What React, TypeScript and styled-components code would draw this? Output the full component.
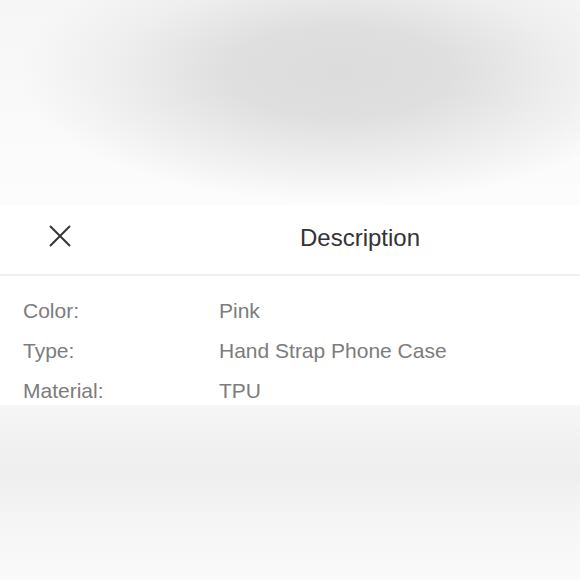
import React from "react";
import styled, { createGlobalStyle } from "styled-components";

const Global = createGlobalStyle`
  html, body { margin: 0; padding: 0; background: #ffffff; }
  body { font-family: "Liberation Sans", Arial, Helvetica, sans-serif; }
`;

const Page = styled.div`
  width: 580px;
  height: 580px;
  display: flex;
  flex-direction: column;
  overflow: hidden;
`;

const BlurredTop = styled.div`
  height: 205px;
  flex-shrink: 0;
  background:
    radial-gradient(ellipse 320px 130px at 340px 72px, #dcdcdc 0%, #dfdfdf 35%, #eeeeee 70%, rgba(251,251,251,0) 100%),
    linear-gradient(to bottom, #f6f6f6 0%, #fbfbfb 80%, #fcfcfc 100%);
`;

const Sheet = styled.section`
  height: 200px;
  flex-shrink: 0;
  background: #ffffff;
  display: flex;
  flex-direction: column;
  overflow: hidden;
`;

const Header = styled.header`
  height: 71px;
  box-sizing: border-box;
  padding: 0 0 3px 49px;
  display: flex;
  align-items: center;
  border-bottom: 2px solid #f0f0f0;
  flex-shrink: 0;
`;

const CloseButton = styled.button`
  width: 22px;
  height: 22px;
  margin-bottom: 4px;
  padding: 0;
  border: 0;
  background: transparent;
  display: flex;
  align-items: center;
  justify-content: center;
  cursor: pointer;
`;

const Title = styled.h1`
  flex: 1;
  margin: 0 0 0 69px;
  text-align: center;
  font-size: 24px;
  font-weight: 400;
  color: #333333;
  line-height: 1;
`;

const List = styled.dl`
  margin: 0;
  padding: 14px 0 0 23px;
  display: grid;
  grid-template-columns: 196px 1fr;
  grid-auto-rows: 40px;
  align-items: center;
`;

const Label = styled.dt`
  font-size: 21px;
  color: #7c7c7c;
  line-height: 1;
`;

const Value = styled.dd`
  margin: 0;
  font-size: 21px;
  color: #7c7c7c;
  line-height: 1;
`;

const BlurredBottom = styled.div`
  flex: 1;
  background: linear-gradient(to bottom, #f6f6f6 0%, #f0f0f0 25%, #efefef 40%, #f5f5f5 65%, #fafafa 100%);
`;

const rows: [string, string][] = [
  ["Color:", "Pink"],
  ["Type:", "Hand Strap Phone Case"],
  ["Material:", "TPU"],
];

export default function App() {
  return (
    <Page>
      <Global />
      <BlurredTop />
      <Sheet>
        <Header>
          <CloseButton aria-label="Close">
            <svg width="22" height="22" viewBox="0 0 22 22">
              <path d="M1.5 1.5 L20.5 20.5 M20.5 1.5 L1.5 20.5" stroke="#333" strokeWidth="1.9" strokeLinecap="round" fill="none" />
            </svg>
          </CloseButton>
          <Title>Description</Title>
        </Header>
        <List>
          {rows.map(([k, v]) => (
            <React.Fragment key={k}>
              <Label>{k}</Label>
              <Value>{v}</Value>
            </React.Fragment>
          ))}
        </List>
      </Sheet>
      <BlurredBottom />
    </Page>
  );
}
